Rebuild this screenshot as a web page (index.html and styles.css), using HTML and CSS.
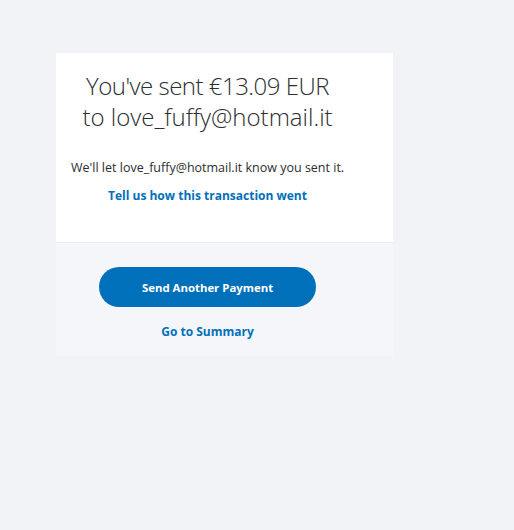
FILE: index.html
```html
<!DOCTYPE html>
<html lang="en">
<head>
<meta charset="utf-8">
<title>Payment sent</title>
<link rel="stylesheet" href="styles.css">
</head>
<body>
<main class="panel">
  <section class="card">
    <div class="col">
      <h1 class="title"><span class="amount">You've sent €13.09 EUR</span><br>to love_fuffy@hotmail.it</h1>
      <p class="note">We'll let love_fuffy@hotmail.it know you sent it.</p>
      <a class="link" href="#">Tell us how this transaction went</a>
    </div>
  </section>
  <section class="actions">
    <div class="col">
      <button class="btn" type="button">Send Another Payment</button>
      <a class="link" href="#">Go to Summary</a>
    </div>
  </section>
</main>
</body>
</html>
```

FILE: styles.css
```css
html, body {
  margin: 0;
  padding: 0;
  background: #f2f3f7;
  font-family: "Open Sans", "Noto Sans", sans-serif;
  color: #2c2e2f;
}
.panel {
  width: 337px;
  margin: 53px 0 0 56px;
}
.card {
  background: #ffffff;
  height: 190px;
  box-sizing: border-box;
  padding-top: 17px;
  border-bottom: 1px solid #ecedf1;
}
.col {
  width: 273px;
  margin-left: 15px;
  display: flex;
  flex-direction: column;
  align-items: center;
}
.title {
  margin: 0;
  font-size: 24px;
  line-height: 31px;
  font-weight: 300;
  text-align: center;
  color: #2c2e2f;
}
.amount {
  letter-spacing: -0.5px;
}
.note {
  margin: 27px 0 0;
  font-size: 12.5px;
  line-height: 18px;
  white-space: nowrap;
  align-self: flex-start;
}
.link {
  color: #0070ba;
  font-weight: 700;
  font-size: 12px;
  line-height: 18px;
  text-decoration: none;
  margin-top: 10px;
}
.actions {
  background: #f5f6fa;
  height: 113px;
  padding-top: 24px;
  box-sizing: border-box;
}
.btn {
  width: 217px;
  height: 40px;
  border: 0;
  border-radius: 20px;
  background: #0070ba;
  color: #ffffff;
  font-family: inherit;
  font-weight: 700;
  font-size: 11.4px;
  padding: 0;
}
.actions .link {
  margin-top: 16px;
}
```
